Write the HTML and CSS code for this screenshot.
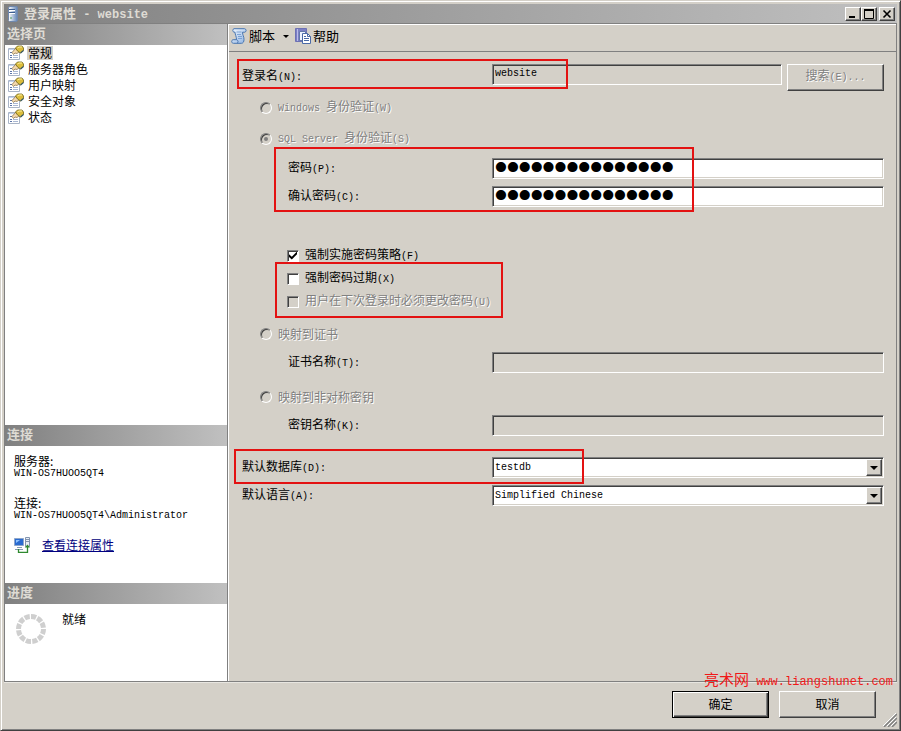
FILE: index.html
```html
<!DOCTYPE html>
<html lang="zh-CN">
<head>
<meta charset="utf-8">
<meta name="viewport" content="width=device-width, initial-scale=1">
<title>登录属性 - website</title>
<link rel="stylesheet" href="styles.css">
</head>
<body>
<svg class="defs" aria-hidden="true">
  <defs>
    <linearGradient id="blue" x1="0" y1="0" x2="1" y2="1">
      <stop offset="0" stop-color="#f4f9ff"/><stop offset="1" stop-color="#8db2e2"/>
    </linearGradient>
    <linearGradient id="server" x1="0" y1="0" x2="1" y2="0">
      <stop offset="0" stop-color="#ffffff"/><stop offset="1" stop-color="#5f82b4"/>
    </linearGradient>
    <symbol id="page" viewBox="0 0 16 16">
      <path d="M.5 3.500h11v11H.5z" fill="#fff" stroke="#a9b4c6"/>
      <path d="M1 4h6v1H1z" fill="#c3d3ee"/>
      <path d="M2 7.500h2M2 10.500h2M2 12.500h2" stroke="#5b74a8"/>
      <path d="M5 10.500h5M5 12.500h5" stroke="#a9b7d2"/>
      <path d="M4 7.500 8 3l3.500 3.500-2.500 2-2-.5-1.500 1.500z" fill="#f4d9ae" stroke="#80653a" stroke-width=".7"/>
      <path d="M7.500 3 9.500 1h4.500l1.500 2v2.500L12.500 8 9.500 6z" fill="#dcbd3c" stroke="#6e641c" stroke-width=".8"/>
      <path d="m9.500 3 1.500-1h3" stroke="#fff3a0" fill="none"/>
      <path d="m12.500 8 3-2.500" stroke="#395a68" stroke-width="1.200"/>
    </symbol>
  </defs>
</svg>
<div class="window">
  <header class="titlebar">
    <svg class="title-icon" viewBox="0 0 12 16" aria-hidden="true">
      <path d="M1.500 1.500 3 .5h7l.5 1v13l-1 1h-7l-1-1z" fill="url(#server)" stroke="#7088ac"/>
      <path d="M2 3.500h6M2 6.500h6" stroke="#3c5e91"/><path d="M2 4.500h6M2 7.500h6" stroke="#fff"/>
      <path d="M3 12h2" stroke="#4b9b59"/>
    </svg>
    <h1>登录属性<span> - website</span></h1>
    <div class="window-buttons">
      <button type="button" aria-label="最小化"><svg viewBox="0 0 12 10"><path d="M2 8h6" stroke="#000" stroke-width="2"/></svg></button>
      <button type="button" aria-label="最大化"><svg viewBox="0 0 12 10"><path d="M1.500 1v8.500h9V1" fill="none" stroke="#000"/><path d="M1 1h10" stroke="#000" stroke-width="2"/></svg></button>
      <button type="button" class="close" aria-label="关闭"><svg viewBox="0 0 12 10"><path d="m2.500 1.500 7 7m0-7-7 7" stroke="#000" stroke-width="1.600"/></svg></button>
    </div>
  </header>

  <div class="body">
    <aside class="sidebar">
      <h2>选择页</h2>
      <nav class="pages">
        <a href="#general" aria-current="page"><svg aria-hidden="true"><use href="#page"/></svg><span>常规</span></a>
        <a href="#roles"><svg aria-hidden="true"><use href="#page"/></svg><span>服务器角色</span></a>
        <a href="#mapping"><svg aria-hidden="true"><use href="#page"/></svg><span>用户映射</span></a>
        <a href="#securables"><svg aria-hidden="true"><use href="#page"/></svg><span>安全对象</span></a>
        <a href="#status"><svg aria-hidden="true"><use href="#page"/></svg><span>状态</span></a>
      </nav>
      <h2>连接</h2>
      <section class="connection">
        <dl>
          <dt>服务器:</dt><dd class="mono">WIN-OS7HUOO5QT4</dd>
          <dt>连接:</dt><dd class="mono">WIN-OS7HUOO5QT4\Administrator</dd>
        </dl>
        <div class="connection-link">
          <svg viewBox="0 0 16 16" aria-hidden="true">
            <path d="M.5 1.500h9v7h-9z" fill="#2a6bd0" stroke="#8ea6ca"/>
            <path d="M2 3h4L2 6z" fill="#8ec2ff"/>
            <path d="M3 10.500h5M1 12.500h8" stroke="#8799b5"/>
            <path d="M11.500.5h4v9h-4z" fill="#e8eef6" stroke="#8394ae"/>
            <path d="M12 2.500h3M12 4.500h3" stroke="#8394ae"/>
            <path d="M4.500 12v3.500h9V9" fill="none" stroke="#2f8a2f" stroke-width="1.300"/>
            <path d="m10.800 10.500 2.700-3 2.500 3z" fill="#2f8a2f"/>
          </svg>
          <a href="#connection">查看连接属性</a>
        </div>
      </section>
      <h2>进度</h2>
      <section class="progress">
        <svg viewBox="0 0 30 30" aria-hidden="true">
          <circle cx="15" cy="15" r="12.500" fill="none" stroke="#cfcfcf" stroke-width="5" pathLength="120" stroke-dasharray="8 2"/>
        </svg>
        <span>就绪</span>
      </section>
    </aside>

    <main class="main">
      <div class="toolbar">
        <button type="button">
          <svg viewBox="0 0 16 16" aria-hidden="true">
            <path d="M3 .7h10.500c2 .2 2.200 3 .3 3.500h-2.300c0 3 1.500 4 1.500 7.300 0 2.300-1 3.800-2.500 3.800H2.500c-2.200 0-2.500-3.300-.3-3.600h3.300C5.500 8.500 4 6.500 4 4.200H3C1.500 4 1.300 1 3 .7z" fill="url(#blue)" stroke="#4875b0"/>
            <path d="M5.500 4h5M6 6.500h4M7 8.500h4M7 10.500h4" stroke="#6b95cd" stroke-width=".8"/>
            <path d="M5.500 11.700c2 .5 2 3 .5 3.600" fill="none" stroke="#4875b0"/>
          </svg>
          <span>脚本</span><i class="caret"></i>
        </button>
        <button type="button">
          <svg viewBox="0 0 16 16" aria-hidden="true">
            <path d="M.5.5h11v13H.5z" fill="#7c7fc4" stroke="#6d71b4"/><path d="M2.500 1v12" stroke="#b9bce9"/>
            <path d="M4.500 3.500h6v9h-6z" fill="#edf3ff" stroke="#6378a9"/>
            <path d="M7.500 5.500h5l3 3v7h-8z" fill="#fff" stroke="#4b6aa6"/>
            <path d="M12.500 5.500v3h3M9 10.500h5M9 12.500h5M9 8.500h2" fill="none" stroke="#4b6aa6"/>
          </svg>
          <span>帮助</span>
        </button>
      </div>

      <form class="form">
        <div class="group mark-login">
          <div class="row login-row">
            <label for="login">登录名<span class="mono">(N):</span></label>
            <input class="field mono readonly" id="login" type="text" value="website" readonly>
            <button type="button" class="btn search" disabled>搜索<span class="mono">(E)...</span></button>
          </div>
        </div>
        <label class="choice radio-row"><input type="radio" name="auth" disabled><span><span class="mono">Windows </span>身份验证<span class="mono">(W)</span></span></label>
        <label class="choice radio-row"><input type="radio" name="auth" checked disabled><span><span class="mono">SQL Server </span>身份验证<span class="mono">(S)</span></span></label>
        <div class="group mark-password">
          <div class="row sub"><label for="pw">密码<span class="mono">(P):</span></label><input class="field password" id="pw" type="password" value="123456789012345"></div>
          <div class="row sub"><label for="pw2">确认密码<span class="mono">(C):</span></label><input class="field password" id="pw2" type="password" value="123456789012345"></div>
        </div>
        <div class="checks">
          <label class="choice"><input type="checkbox" checked><span>强制实施密码策略<span class="mono">(F)</span></span></label>
          <div class="group mark-checks">
            <label class="choice"><input type="checkbox"><span>强制密码过期<span class="mono">(X)</span></span></label>
            <label class="choice"><input type="checkbox" disabled><span>用户在下次登录时必须更改密码<span class="mono">(U)</span></span></label>
          </div>
        </div>
        <div class="mapping">
          <label class="choice radio-row"><input type="radio" name="auth" disabled><span>映射到证书</span></label>
          <div class="row sub"><label for="cert">证书名称<span class="mono">(T):</span></label><input class="field readonly" id="cert" type="text" readonly></div>
        </div>
        <div class="mapping">
          <label class="choice radio-row"><input type="radio" name="auth" disabled><span>映射到非对称密钥</span></label>
          <div class="row sub"><label for="key">密钥名称<span class="mono">(K):</span></label><input class="field readonly" id="key" type="text" readonly></div>
        </div>
        <div class="defaults">
          <div class="group mark-database">
            <div class="row"><label for="db">默认数据库<span class="mono">(D):</span></label><span class="combo"><select class="field mono" id="db"><option>testdb</option></select></span></div>
          </div>
          <div class="row"><label for="lang">默认语言<span class="mono">(A):</span></label><span class="combo"><select class="field mono" id="lang"><option>Simplified Chinese</option></select></span></div>
        </div>
      </form>
    </main>
  </div>

  <footer class="footer">
    <p class="watermark">亮术网<span> www.liangshunet.com</span></p>
    <button type="button" class="btn default">确定</button>
    <button type="button" class="btn">取消</button>
    <svg class="grip" viewBox="0 0 14 14" aria-hidden="true">
      <path d="M1 14 14 1M5 14l9-9M9 14l5-5" stroke="#808080" stroke-width="1.500"/>
      <path d="M0 13 13 0M4 13l9-9M8 13l5-5" stroke="#fff"/>
    </svg>
  </footer>
</div>
</body>
</html>
```
FILE: styles.css
```css
:root {
  --face: #d4d0c8;
  --shadow: #808080;
  --dark: #404040;
  --red: #e31212;
  --mono: "Liberation Mono", "Noto Sans CJK SC", monospace;
}

*, *::before, *::after { box-sizing: border-box; }

body {
  margin: 0;
  background: var(--face);
  color: #000;
  font: 12px/16px "Noto Sans CJK SC", sans-serif;
}

button, input, select { font: inherit; color: inherit; margin: 0; border-radius: 0; }
h1, h2, p, dl, dd { margin: 0; font-size: 12px; }
svg { display: block; flex: none; }

.defs { position: absolute; width: 0; height: 0; }
.mono { font-family: var(--mono); font-size: 10px; white-space: pre; }

.window {
  display: flex;
  flex-direction: column;
  min-height: 100vh;
  padding: 3px;
  border: 1px solid;
  border-color: var(--face) var(--dark) var(--dark) var(--face);
  box-shadow: inset 1px 1px #fff, inset -1px -1px var(--shadow);
}

/* Title bar */
.titlebar {
  display: flex;
  align-items: center;
  height: 19px;
  padding: 0 2px 0 3px;
  background: linear-gradient(90deg, #808080, #c0c0c0);
  color: #dedbd4;
}
.title-icon { width: 12px; height: 16px; margin-right: 5px; }
.titlebar h1 { flex: 1; font-size: 13px; line-height: 18px; }
.titlebar h1 span { font-family: var(--mono); font-size: 12px; white-space: pre; }
.window-buttons { display: flex; }
.window-buttons button {
  width: 16px;
  height: 14px;
  padding: 1px;
  background: var(--face);
  border: 1px solid;
  border-color: #fff var(--dark) var(--dark) #fff;
  box-shadow: inset -1px -1px var(--shadow);
}
.window-buttons svg { width: 12px; height: 10px; }
.window-buttons .close { margin-left: 2px; }

/* Dialog body */
.body {
  flex: 1;
  display: flex;
  border: 1px solid var(--shadow);
  border-left: 0;
  box-shadow: 0 1px #e8e6e1;
}

.sidebar {
  display: flex;
  flex-direction: column;
  flex: 0 0 224px;
  background: #fff;
  border: 1px solid var(--shadow);
  border-width: 0 1px;
}
.sidebar h2 {
  height: 21px;
  padding-left: 2px;
  background: linear-gradient(90deg, #808080, #c0c0c0);
  color: #dedbd4;
  font-size: 13px;
  line-height: 18px;
}
.pages { flex: 1; }
.pages a {
  display: flex;
  align-items: center;
  gap: 3px;
  height: 16px;
  padding-left: 3px;
  color: #000;
  text-decoration: none;
}
.pages svg { width: 16px; height: 16px; }
.pages span { padding: 0 1px; line-height: 14px; }
.pages [aria-current] span { background: var(--face); }

.connection { height: 137px; padding: 7px 9px; }
.connection dt { line-height: 15px; }
.connection dd { line-height: 12px; margin-bottom: 15px; }
.connection-link { display: flex; align-items: center; gap: 12px; }
.connection-link svg { width: 16px; height: 16px; }
.connection-link a { color: #000080; }

.progress { display: flex; gap: 16px; height: 77px; padding: 7px 11px; }
.progress svg { width: 30px; height: 30px; margin-top: 3px; }

.main { flex: 1; min-width: 0; border-left: 1px solid #fff; border-top: 1px solid #fff; }

.toolbar {
  display: flex;
  gap: 6px;
  height: 27px;
  padding: 0 0 4px 2px;
  border-bottom: 1px solid var(--shadow);
}
.toolbar button {
  display: flex;
  align-items: center;
  gap: 2px;
  padding: 0;
  background: none;
  border: 0;
}
.toolbar svg { width: 16px; height: 16px; }
.toolbar span { font-size: 13px; }
.caret {
  width: 6px;
  margin-left: 6px;
  border: 3px solid transparent;
  border-top-color: #000;
  border-bottom: 0;
}

/* Form */
.form { padding: 8px 12px 0 13px; }
.group { position: relative; }
.row { display: flex; align-items: center; height: 28px; }
.row > label { flex: 0 0 250px; }
.row.sub { padding-left: 46px; }
.row.sub > label { flex-basis: 204px; }
.login-row { align-items: flex-start; height: 32px; padding-top: 4px; }
.login-row > label { line-height: 21px; }

.field {
  flex: 1;
  min-width: 0;
  width: 100%;
  height: 21px;
  padding: 0 2px;
  background: #fff;
  border: 1px solid;
  border-color: var(--shadow) #fff #fff var(--shadow);
  box-shadow: inset 1px 1px var(--dark), inset -1px -1px var(--face);
  outline: 0;
  appearance: none;
}
.field.mono { font-size: 10px; font-family: var(--mono); line-height: 19px; }
.field.readonly { background: var(--face); padding-bottom: 2px; }
.password {
  font-family: "Liberation Serif", serif;
  font-size: 34px;
  line-height: 19px;
  -webkit-text-stroke: 2px #000;
}

.combo { position: relative; flex: 1; display: flex; }
.combo::before {
  content: "";
  position: absolute;
  top: 2px;
  right: 2px;
  width: 16px;
  height: 17px;
  background: var(--face);
  border: 1px solid;
  border-color: #fff var(--dark) var(--dark) #fff;
  box-shadow: inset -1px -1px var(--shadow);
  pointer-events: none;
}
.combo::after {
  content: "";
  position: absolute;
  top: 9px;
  right: 6px;
  border: 4px solid transparent;
  border-top-color: #000;
  border-bottom: 0;
  pointer-events: none;
}

.btn {
  width: 97px;
  height: 27px;
  padding: 0 0 2px;
  background: var(--face);
  border: 1px solid;
  border-color: #fff var(--dark) var(--dark) #fff;
  box-shadow: inset -1px -1px var(--shadow);
}
.btn.default {
  border-color: #000;
  box-shadow: inset 1px 1px #fff, inset -1px -1px var(--dark), inset -2px -2px var(--shadow);
}
.search { flex: none; margin-left: 5px; }
.btn:disabled, .choice:has(:disabled) { color: var(--shadow); text-shadow: 1px 1px #fff; }

.choice { display: flex; align-items: center; gap: 6px; height: 23px; }
.radio-row { height: 31px; padding-left: 18px; }
.choice input {
  appearance: none;
  flex: none;
  display: grid;
  place-items: center;
  width: 12px;
  height: 12px;
  border: 1px solid;
  border-color: var(--shadow) #fff #fff var(--shadow);
}
.choice [type="radio"] { border-radius: 50%; box-shadow: inset 1px 1px var(--dark); }
.choice [type="radio"]:checked::before {
  content: "";
  width: 4px;
  height: 4px;
  border-radius: 50%;
  background: var(--shadow);
}
.choice [type="checkbox"] { background: #fff; box-shadow: inset 1px 1px var(--dark); }
.choice [type="checkbox"]:disabled { background: var(--face); }
.choice [type="checkbox"]:checked::before {
  content: "";
  width: 8px;
  height: 8px;
  background: #000;
  clip-path: polygon(0 35%, 35% 65%, 100% 0, 100% 35%, 35% 100%, 0 70%);
}
.checks { margin-top: 34px; padding-left: 45px; }
.mapping { display: flow-root; margin-top: 7px; }
.mapping .radio-row { height: 28px; }
.defaults { margin-top: 14px; }

/* Highlight frames */
.group::after {
  content: "";
  position: absolute;
  border: 2px solid var(--red);
  pointer-events: none;
}
.mark-login::after { top: -1px; left: -5px; width: 331px; height: 30px; }
.mark-password::after { top: -7px; left: 32px; width: 420px; height: 65px; }
.mark-checks::after { top: -5px; left: -12px; width: 228px; height: 56px; }
.mark-database::after { top: -4px; left: -8px; width: 350px; height: 35px; }

/* Footer */
.footer {
  position: relative;
  display: flex;
  justify-content: flex-end;
  gap: 10px;
  height: 45px;
  padding: 9px 21px 0;
}
.watermark {
  position: absolute;
  top: -12px;
  right: 4px;
  color: #f01818;
  font-size: 15px;
  line-height: 18px;
}
.watermark span { font-family: var(--mono); font-size: 12px; white-space: pre; }
.grip { position: absolute; right: 0; bottom: 0; width: 14px; height: 14px; }
```
